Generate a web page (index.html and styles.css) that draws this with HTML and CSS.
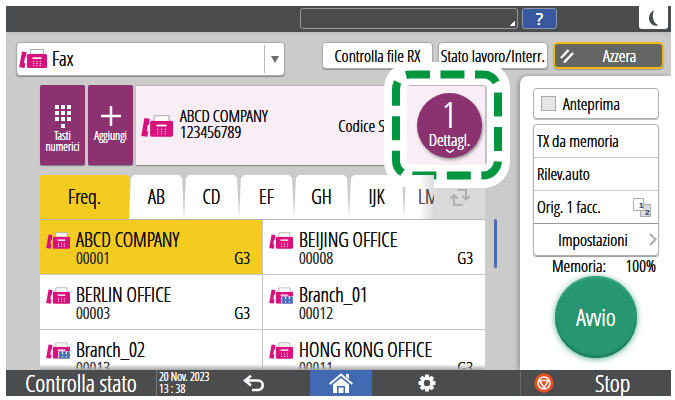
FILE: index.html
```html
<!DOCTYPE html>
<html lang="it">
<head>
<meta charset="utf-8">
<meta name="viewport" content="width=device-width, initial-scale=1">
<title>Fax</title>
<link rel="stylesheet" href="styles.css">
</head>
<body>
<svg class="defs" aria-hidden="true">
  <symbol id="fax" viewBox="0 0 28 19">
    <path fill="#d9117c" d="M3 2.500L7.600 3.200 6.800 8.500 6 8.500 5 14 6.500 14.300 5.500 19 .2 18.300z"/>
    <path fill="#d9117c" d="M9 5h18l1 1v12l-1 1H9l-1-1V6z"/>
    <path fill="#fff" d="M11.500.5h13V5h-13z"/>
    <path fill="none" stroke="#aaa" d="M11.500 5V.5h13V5"/>
    <path fill="#fff" d="M13.500 8.300h9v1.600h-9z"/>
    <path fill="#fbd5e8" d="M14 12h1.200v1H14zM17.400 12h1.200v1h-1.200zM20.800 12H22v1h-1.200zM14 14h1.200v1H14zM17.400 14h1.200v1h-1.200zM20.800 14H22v1h-1.200zM14 16h1.200v1H14zM17.400 16h1.200v1h-1.200zM20.800 16H22v1h-1.200z"/>
  </symbol>
  <symbol id="fax-group" viewBox="0 0 28 19">
    <use href="#fax" width="28" height="19"/>
    <path fill="#fff" d="M14.500 10.500H28V19H14.500z"/>
    <g fill="#3f6bb5">
      <circle cx="17" cy="12.300" r="1.800"/><circle cx="21.500" cy="12.300" r="1.800"/><circle cx="26" cy="12.300" r="1.800"/>
      <path d="M15 13.800h13V16H15z"/>
      <circle cx="17" cy="16.300" r="1.600"/><circle cx="21.500" cy="16.300" r="1.600"/><circle cx="26" cy="16.300" r="1.600"/>
      <path d="M15 17.300h13V19H15z"/>
    </g>
  </symbol>
</svg>
<div class="screen">
  <header class="topbar">
    <div class="message"></div>
    <button class="help" aria-label="Guida">?</button>
    <button class="sleep" aria-label="Risparmio energia"><svg width="12" height="18" viewBox="0 0 12 18"><path fill="#4b4c4e" d="M6 1C-.5 4-1 14 6 16.500c2 .5 3.500.3 4.500-.5C5 14.500 3.500 6 6 1z"/></svg></button>
  </header>

  <div class="toolbar">
    <div class="mode">
      <svg class="mode-icon" width="28" height="19"><use href="#fax"/></svg>
      <select class="mode-select" aria-label="Funzione"><option>Fax</option></select>
      <span class="mode-arrow"><svg width="8" height="7" viewBox="0 0 8 7"><path fill="#6c6d6d" d="M0 0h8L4 7z"/></svg></span>
    </div>
    <div class="actions">
      <button class="btn">Controlla file RX</button>
      <button class="btn">Stato lavoro/Interr.</button>
      <button class="btn reset"><svg width="14" height="14" viewBox="0 0 14 14"><path stroke="#fff" stroke-width="2.400" d="M1 9L8.500 1M4 13.500L13 4"/></svg><span>Azzera</span></button>
    </div>
  </div>

  <div class="content">
    <main class="work">
      <section class="dest">
        <button class="key"><svg width="18" height="24" viewBox="0 0 18 24"><path fill="#fff" d="M1 0h4v4H1zM7 0h4v4H7zM13 0h4v4h-4zM1 6h4v4H1zM7 6h4v4H7zM13 6h4v4h-4zM1 12h4v4H1zM7 12h4v4H7zM13 12h4v4h-4zM7 19h4v4H7z"/></svg><span>Tasti<br>numerici</span></button>
        <button class="key"><svg width="20" height="24" viewBox="0 0 20 24"><path stroke="#fff" stroke-width="2.500" d="M0 11h20M10 1v20"/></svg><span>Aggiungi</span></button>
        <div class="current">
          <svg width="32" height="22"><use href="#fax"/></svg>
          <div class="current-name">ABCD COMPANY<br>123456789</div>
          <div class="current-code">Codice S</div>
          <button class="details"><span class="count">1</span><span>Dettagl.</span><svg width="8" height="4" viewBox="0 0 8 4"><path fill="none" stroke="#fff" stroke-width="1.500" d="M0 .5l4 3 4-3"/></svg></button>
          <svg class="focus" width="126" height="126" viewBox="0 0 126 126" aria-hidden="true">
            <rect x="11.500" y="11.500" width="103" height="103" rx="15" fill="none" stroke="#fff" stroke-width="23"/>
            <path fill="none" stroke="#009640" stroke-width="8" stroke-dasharray="24 10.500" d="M22 13Q24 12.500 27 12.500H99A15 15 0 0 1 114 27.500V98.500A15 15 0 0 1 99 113.500H27A15 15 0 0 1 12 98.500V27.500Q12 22 15 18"/>
          </svg>
        </div>
      </section>

      <nav class="tabs">
        <button class="tab active">Freq.</button>
        <button class="tab">AB</button>
        <button class="tab">CD</button>
        <button class="tab">EF</button>
        <button class="tab">GH</button>
        <button class="tab">IJK</button>
        <button class="tab cut">LM</button>
        <button class="switch" aria-label="Cambia titolo"><svg width="20" height="17" viewBox="0 0 20 17"><path fill="none" stroke="#b0b0b0" stroke-width="2" d="M7.500 1H16v8M12.500 7l3.500 3.500L19.500 7M12.500 16H4V7M.5 9.500L4 6l3.500 3.500"/></svg></button>
      </nav>

      <div class="list-wrap">
        <div class="list">
          <button class="entry selected"><svg width="24" height="17"><use href="#fax"/></svg><span class="entry-text"><span class="name">ABCD COMPANY</span><span class="num">00001</span></span><span class="type">G3</span></button>
          <button class="entry"><svg width="24" height="17"><use href="#fax"/></svg><span class="entry-text"><span class="name">BEIJING OFFICE</span><span class="num">00008</span></span><span class="type">G3</span></button>
          <button class="entry"><svg width="24" height="17"><use href="#fax"/></svg><span class="entry-text"><span class="name">BERLIN OFFICE</span><span class="num">00003</span></span><span class="type">G3</span></button>
          <button class="entry"><svg width="24" height="17"><use href="#fax-group"/></svg><span class="entry-text"><span class="name">Branch_01</span><span class="num">00012</span></span></button>
          <button class="entry"><svg width="24" height="17"><use href="#fax-group"/></svg><span class="entry-text"><span class="name">Branch_02</span><span class="num">00013</span></span></button>
          <button class="entry"><svg width="24" height="17"><use href="#fax"/></svg><span class="entry-text"><span class="name">HONG KONG OFFICE</span><span class="num">00011</span></span><span class="type">G3</span></button>
        </div>
        <div class="scroll"></div>
      </div>
    </main>

    <aside class="panel">
      <label class="preview"><input type="checkbox">Anteprima</label>
      <div class="settings">
        <button class="setting">TX da memoria</button>
        <button class="setting">Rilev.auto</button>
        <button class="setting">Orig. 1 facc.<svg width="18" height="19" viewBox="0 0 18 19"><path fill="#ddd" stroke="#aaa" d="M7.500 6.500h10v12h-10z"/><path fill="#fff" stroke="#aaa" d="M.5.5h10v12H.5z"/><text x="6" y="10" class="page-no">1</text><text x="12" y="17" class="page-no">2</text></svg></button>
        <button class="setting more"><span>Impostazioni</span><svg width="8" height="13" viewBox="0 0 8 13"><path fill="none" stroke="#aaa" stroke-width="2" d="M1 1l5.500 5.500L1 12"/></svg></button>
      </div>
      <div class="memory"><span>Memoria:</span><span>100%</span></div>
      <button class="start">Avvio</button>
    </aside>
  </div>

  <footer class="bottombar">
    <button class="status">Controlla stato</button>
    <div class="clock">20 Nov. 2023<br>13 : 38</div>
    <button class="nav back" aria-label="Indietro"><svg width="22" height="17" viewBox="0 0 22 17"><path fill="none" stroke="#fff" stroke-width="2.600" d="M8 .8L2 5.500 8 10.500M2 5.500h13a4.700 4.700 0 0 1 0 9.500H9"/></svg></button>
    <button class="nav home" aria-label="Home"><svg width="24" height="20" viewBox="0 0 24 20"><path fill="none" stroke="#fff" stroke-width="2" d="M.7 11L12 1.500 23.300 11"/><path fill="#fff" d="M17 1h3v5l-3-2.500zM12 5l8 6.500V20h-4v-7H8v7H4v-8.500z"/><path fill="#fff" d="M9.500 14.500h5V20h-5z"/></svg></button>
    <button class="nav gear" aria-label="Impostazioni"><svg width="18" height="18" viewBox="-9 -9 18 18"><g fill="#fff"><path id="tooth" d="M-1.800-8.500h3.600l.6 4h-4.800zM-1.800 8.500h3.600l.6-4h-4.800z"/><use href="#tooth" transform="rotate(45)"/><use href="#tooth" transform="rotate(90)"/><use href="#tooth" transform="rotate(135)"/></g><circle r="4.700" fill="none" stroke="#fff" stroke-width="3"/></svg></button>
    <button class="stop"><svg width="20" height="20" viewBox="0 0 20 20"><circle cx="10" cy="10" r="9.700" fill="#e8501e"/><circle cx="10" cy="10" r="6" fill="none" stroke="#fff" stroke-width="1.500"/><path fill="none" stroke="#fff" stroke-width="1.600" d="M5.500 7.500h9L10 14.800z"/></svg><span>Stop</span></button>
  </footer>
</div>
</body>
</html>
```
FILE: styles.css
```css
* { box-sizing: border-box; }

body {
  margin: 0;
  background: #fff;
  color: #111;
  font: 17px/20px "Open Sans Condensed Light", "Roboto Condensed", "Liberation Sans", sans-serif;
}

button, select, input { margin: 0; font: inherit; color: inherit; }
button, select, label, div, span { text-shadow: 0 0 0 currentColor, 0 0 0 currentColor; }
button { padding: 0; border: 0; background: none; }
svg { display: block; flex: none; }
.defs { position: absolute; width: 0; height: 0; }

.screen {
  display: flex;
  flex-direction: column;
  height: 100vh;
  padding: 6px 4px 4px 6px;
}

/* top bar */
.topbar {
  display: flex;
  gap: 4px;
  height: 26px;
  flex: none;
  background: #4b4c4e;
}
.message {
  width: 218px;
  height: 21px;
  margin: 2px 0 0 auto;
  border: 1px solid #999;
  border-radius: 3px;
  background: linear-gradient(135deg, transparent 50%, #fff 50%) right 2px bottom 2px / 5px 5px no-repeat;
}
.help {
  width: 35px;
  height: 21px;
  margin: 2px 78px 0 0;
  border: 1px solid #8c97ae;
  border-radius: 3px;
  background: #3a58a0;
  color: #fff;
  font: 17px/18px "Open Sans", sans-serif;
}
.sleep {
  display: grid;
  place-items: center;
  width: 29px;
  height: 23px;
  margin-right: 3px;
  border-radius: 0 0 3px 3px;
  background: #fff;
}

/* toolbar */
.toolbar {
  display: flex;
  justify-content: space-between;
  gap: 37px;
  height: 44px;
  flex: none;
  padding: 10px 7px 0 10px;
  background: linear-gradient(#bdbdbd, #cbcbcb 5px);
}
.mode { position: relative; flex: 1; height: 34px; }
.mode-select {
  appearance: none;
  width: 100%;
  height: 100%;
  padding: 0 35px;
  border: 1px solid #a8a8a8;
  border-radius: 4px;
  background: #fff;
  box-shadow: 0 1px 1px #888;
  font-size: 20px;
}
.mode-icon { position: absolute; left: 3px; top: 7px; }
.mode-arrow {
  position: absolute;
  right: 1px;
  top: 3px;
  display: grid;
  place-items: center;
  width: 20px;
  height: 28px;
  border-left: 1px solid #bbb;
}
.actions { display: grid; grid-template-columns: repeat(3, minmax(0, 1fr)); gap: 5px; flex: 0 0 342px; }
.btn {
  height: 27px;
  border: 1px solid #a8a8a8;
  border-radius: 4px;
  background: #fff;
  box-shadow: 0 1px 1px #999;
  white-space: nowrap;
}
.reset {
  display: flex;
  align-items: center;
  padding-left: 5px;
  border: 2px solid #efb818;
  border-radius: 5px;
  background: #646663;
  color: #fff;
}
.reset span { flex: 1; padding-left: 3px; text-align: center; }

/* content */
.content {
  display: flex;
  flex: 1;
  min-height: 0;
  background: #cbcbcb;
}
.work {
  display: flex;
  flex: 1;
  flex-direction: column;
  min-width: 0;
  padding: 9px 0 0 34px;
}
.dest { display: flex; gap: 3px; height: 80px; margin-right: 35px; flex: none; }
.key {
  display: flex;
  flex-direction: column;
  align-items: center;
  gap: 1px;
  width: 45px;
  padding-top: 20px;
  border-radius: 2px;
  background: #8d3270;
  box-shadow: 0 1px 1px #777;
  color: #fff;
  font-size: 12px;
  line-height: 11px;
}
.current {
  position: relative;
  display: flex;
  flex: 1;
  align-items: center;
  padding: 0 3px 0 5px;
  border-top: 1px solid #b9b3b8;
  background: #f9edf6;
  box-shadow: 0 1px 1px #888;
}
.current-name { margin-left: 7px; padding-bottom: 4px; line-height: 16px; }
.current-code { margin-left: auto; }
.details {
  display: flex;
  flex-direction: column;
  align-items: center;
  width: 65px;
  height: 65px;
  margin-left: 32px;
  border-radius: 50%;
  background: #8d3270;
  box-shadow: 1px 2px 3px #999;
  color: #fff;
  line-height: 18px;
}
.count { padding-top: 6px; font-size: 36px; line-height: 32px; }
.focus { position: absolute; right: -25px; top: -24px; }

/* index tabs */
.tabs { display: flex; height: 44px; margin: 10px 35px 0 0; flex: none; overflow: hidden; }
.tab {
  flex: 0 0 55px;
  background: #fff;
  clip-path: polygon(0 100%, 2px 3px, 5px 0, calc(100% - 5px) 0, calc(100% - 2px) 3px, 100% 100%);
  font-size: 20px;
}
.active { flex: 0 0 89px; background: #f4cb1f; clip-path: none; border-radius: 3px 3px 0 0; }
.cut {
  flex: 1;
  min-width: 0;
  padding-left: 14px;
  background: linear-gradient(90deg, #fff 50%, #dadada);
  clip-path: polygon(0 100%, 2px 0, 100% 0, 100% 100%);
  color: #555;
  text-align: left;
  overflow: hidden;
}
.switch { display: grid; place-items: center; flex: 0 0 51px; background: #dadada; }

/* address list */
.list-wrap { display: flex; gap: 9px; flex: 1; min-height: 0; margin-right: 23px; }
.list {
  position: relative;
  display: grid;
  flex: 1;
  grid-template-columns: 1fr 1fr;
  grid-auto-rows: 54px;
  gap: 1px;
  border-top: 1px solid #b5b5b5;
  background: #c4c4c4;
  overflow: hidden;
}
.list::after {
  content: "";
  position: absolute;
  inset: auto 0 0;
  height: 6px;
  background: linear-gradient(transparent, #aaa);
}
.entry { display: flex; align-items: flex-start; padding: 10px 12px 0 6px; background: #fff; text-align: left; }
.entry svg { margin-top: 2px; }
.selected { background: #f4cb1f; }
.entry-text { display: grid; margin-left: 6px; }
.name { font-size: 20px; line-height: 20px; }
.num { line-height: 15px; color: #333; }
.type { margin: 20px 0 0 auto; line-height: 15px; }
.scroll { width: 3px; height: 49px; border-radius: 2px; background: #456db8; }

/* side panel */
.panel {
  flex: 0 0 151px;
  padding: 12px 12px 0 13px;
  border-radius: 8px 0 0 0;
  background: #fff;
  box-shadow: -2px 0 4px #999;
  clip-path: inset(-3px 0 0 -6px);
}
.preview {
  display: flex;
  align-items: center;
  gap: 7px;
  height: 31px;
  padding-left: 7px;
  border: 1px solid #b0b0b0;
  border-radius: 4px;
  box-shadow: 0 1px 0 #bbb;
}
.preview input { appearance: none; width: 15px; height: 15px; border: 1px solid #aaa; background: #e5e5e5; }
.settings { margin-top: 5px; border: 1px solid #b0b0b0; border-radius: 4px; box-shadow: 0 1px 1px #999; }
.setting {
  display: flex;
  align-items: center;
  justify-content: space-between;
  width: 100%;
  height: 33px;
  padding: 0 7px 0 3px;
  border-bottom: 1px solid #c8c8c8;
}
.setting:nth-child(3) { border-color: #999; }
.more { height: 31px; padding-right: 1px; border-bottom: 0; }
.more span { flex: 1; text-align: center; }
.page-no { fill: #3f6bb5; font: 8px "Liberation Sans", sans-serif; }
.memory { display: flex; justify-content: space-between; padding: 0 3px 0 19px; line-height: 20px; }
.start {
  display: block;
  width: 82px;
  height: 82px;
  margin: 0 auto;
  border-radius: 50%;
  background: #269770;
  box-shadow: 0 1px 6px #4fa98a, inset 0 -2px 2px #167a58, inset 0 2px 2px #3aa785;
  color: #fff;
  font-size: 24px;
}

/* bottom bar */
.bottombar { display: flex; align-items: stretch; height: 26px; flex: none; background: #4b4c4e; color: #fff; }
.status { flex: 0 0 151px; font-size: 24px; line-height: 26px; border-right: 1px solid #777; }
.clock { flex: 0 0 64px; padding: 1px 0 0 2px; font-size: 12px; line-height: 12px; white-space: nowrap; }
.nav { display: grid; place-items: center; }
.back { flex: 0 1 89px; padding-right: 24px; }
.home { flex: 0 0 62px; background: #426ab3; }
.gear { flex: 1; padding-right: 38px; }
.stop { display: flex; align-items: center; flex: 0 0 151px; padding-left: 13px; border-left: 1px solid #666; font-size: 24px; }
.stop span { margin-left: 41px; }
```
